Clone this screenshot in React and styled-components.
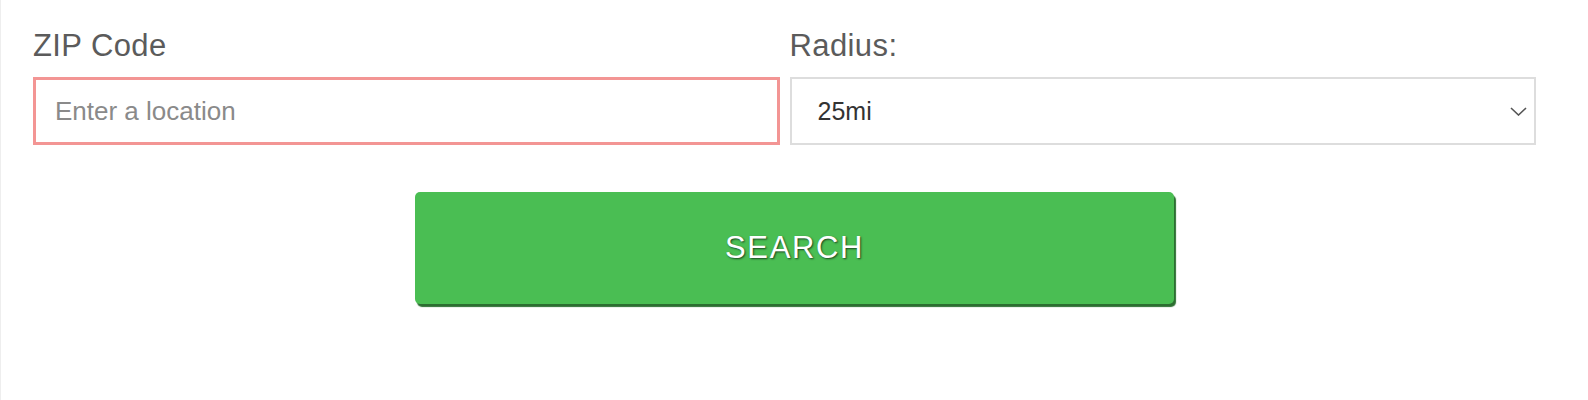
import React, { useState } from 'react'
import styled, { createGlobalStyle } from 'styled-components'

const GlobalStyle = createGlobalStyle`
  html, body {
    margin: 0;
    padding: 0;
    background: #fff;
    font-family: "Liberation Sans", Arial, Helvetica, sans-serif;
  }
`

const Page = styled.div`
  min-height: 400px;
  box-sizing: border-box;
  border-left: 1px solid #eeeeee;
  padding-top: 28px;
`

const FieldsRow = styled.div`
  display: grid;
  grid-template-columns: 1fr 1fr;
  column-gap: 10px;
  padding: 0 52px 0 32px;
`

const Field = styled.div`
  display: flex;
  flex-direction: column;
`

const Label = styled.label`
  font-size: 31px;
  line-height: 35px;
  letter-spacing: 0.4px;
  color: #5b5b5b;
  margin-bottom: 14px;
`

const TextInput = styled.input`
  box-sizing: border-box;
  height: 68px;
  width: 100%;
  border: 3px solid ${props => (props.invalid ? '#f39594' : '#dddddd')};
  padding: 0 19px;
  font-family: inherit;
  font-size: 26px;
  color: #333;
  outline: none;
  &::placeholder {
    color: #8a8a8a;
  }
`

const SelectWrap = styled.div`
  position: relative;
`

const Select = styled.select`
  box-sizing: border-box;
  height: 68px;
  width: 100%;
  border: 2px solid #dddddd;
  border-radius: 0;
  padding: 0 40px 0 26px;
  background: #fff;
  font-family: inherit;
  font-size: 25px;
  color: #333;
  appearance: none;
  outline: none;
`

const Chevron = styled.svg`
  position: absolute;
  right: 9px;
  top: 30px;
  pointer-events: none;
`

const ButtonRow = styled.div`
  display: flex;
  justify-content: center;
  margin-top: 47px;
`

const SearchButton = styled.button`
  width: 759px;
  height: 112px;
  border: none;
  border-radius: 5px;
  background: #4abe53;
  box-shadow: 2px 3px 1px #2c6e31;
  color: #fff;
  font-family: inherit;
  font-size: 31px;
  letter-spacing: 1.6px;
  text-shadow: 1px 1px 2px rgba(0, 0, 0, 0.65);
  cursor: pointer;
`

export default function App() {
    const [zip, setZip] = useState('')
    const [radius, setRadius] = useState('25')

    return (
        <>
            <GlobalStyle />
            <Page>
                <FieldsRow>
                    <Field>
                        <Label htmlFor="zip">ZIP Code</Label>
                        <TextInput
                            id="zip"
                            invalid
                            placeholder="Enter a location"
                            value={zip}
                            onChange={e => setZip(e.target.value)}
                        />
                    </Field>
                    <Field>
                        <Label htmlFor="radius">Radius:</Label>
                        <SelectWrap>
                            <Select id="radius" value={radius} onChange={e => setRadius(e.target.value)}>
                                <option value="10">10mi</option>
                                <option value="25">25mi</option>
                                <option value="50">50mi</option>
                                <option value="100">100mi</option>
                            </Select>
                            <Chevron width="17" height="9" viewBox="0 0 17 9">
                                <path d="M1 1 L8.5 8 L16 1" fill="none" stroke="#555" strokeWidth="1.6" />
                            </Chevron>
                        </SelectWrap>
                    </Field>
                </FieldsRow>
                <ButtonRow>
                    <SearchButton type="button">SEARCH</SearchButton>
                </ButtonRow>
            </Page>
        </>
    )
}
